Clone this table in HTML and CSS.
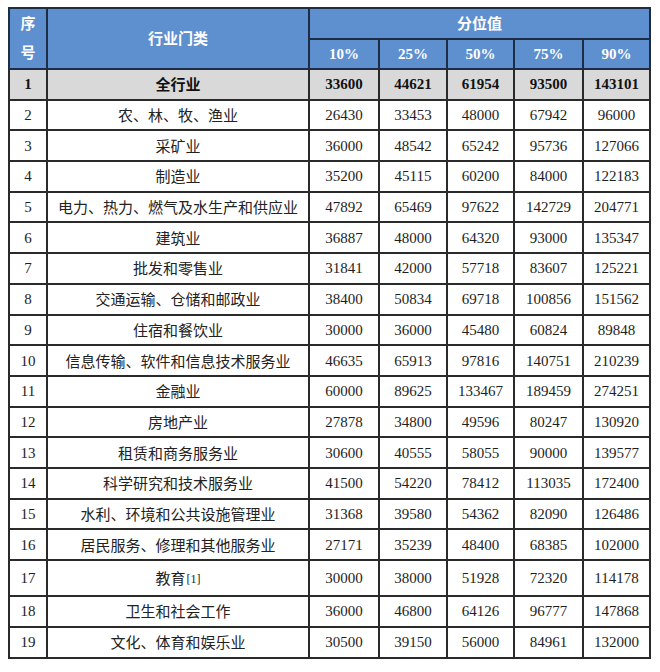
FILE: index.html
```html
<!DOCTYPE html>
<html lang="zh">
<head>
<meta charset="utf-8">
<link rel="stylesheet" href="styles.css">
</head>
<body>
<table class="wage">
  <colgroup>
    <col class="c-no"><col class="c-name"><col class="c-p10"><col class="c-p25"><col class="c-p50"><col class="c-p75"><col class="c-p90">
  </colgroup>
  <thead>
    <tr class="h1">
      <th rowspan="2" class="no-head">序<br>号</th>
      <th rowspan="2">行业门类</th>
      <th colspan="5">分位值</th>
    </tr>
    <tr class="h2">
      <th class="num">10%</th><th class="num">25%</th><th class="num">50%</th><th class="num">75%</th><th class="num">90%</th>
    </tr>
  </thead>
  <tbody>
    <tr class="total"><td>1</td><td class="name">全行业</td><td>33600</td><td>44621</td><td>61954</td><td>93500</td><td>143101</td></tr>
    <tr><td>2</td><td class="name">农、林、牧、渔业</td><td>26430</td><td>33453</td><td>48000</td><td>67942</td><td>96000</td></tr>
    <tr><td>3</td><td class="name">采矿业</td><td>36000</td><td>48542</td><td>65242</td><td>95736</td><td>127066</td></tr>
    <tr><td>4</td><td class="name">制造业</td><td>35200</td><td>45115</td><td>60200</td><td>84000</td><td>122183</td></tr>
    <tr><td>5</td><td class="name">电力、热力、燃气及水生产和供应业</td><td>47892</td><td>65469</td><td>97622</td><td>142729</td><td>204771</td></tr>
    <tr><td>6</td><td class="name">建筑业</td><td>36887</td><td>48000</td><td>64320</td><td>93000</td><td>135347</td></tr>
    <tr><td>7</td><td class="name">批发和零售业</td><td>31841</td><td>42000</td><td>57718</td><td>83607</td><td>125221</td></tr>
    <tr><td>8</td><td class="name">交通运输、仓储和邮政业</td><td>38400</td><td>50834</td><td>69718</td><td>100856</td><td>151562</td></tr>
    <tr><td>9</td><td class="name">住宿和餐饮业</td><td>30000</td><td>36000</td><td>45480</td><td>60824</td><td>89848</td></tr>
    <tr><td>10</td><td class="name">信息传输、软件和信息技术服务业</td><td>46635</td><td>65913</td><td>97816</td><td>140751</td><td>210239</td></tr>
    <tr><td>11</td><td class="name">金融业</td><td>60000</td><td>89625</td><td>133467</td><td>189459</td><td>274251</td></tr>
    <tr><td>12</td><td class="name">房地产业</td><td>27878</td><td>34800</td><td>49596</td><td>80247</td><td>130920</td></tr>
    <tr><td>13</td><td class="name">租赁和商务服务业</td><td>30600</td><td>40555</td><td>58055</td><td>90000</td><td>139577</td></tr>
    <tr><td>14</td><td class="name">科学研究和技术服务业</td><td>41500</td><td>54220</td><td>78412</td><td>113035</td><td>172400</td></tr>
    <tr><td>15</td><td class="name">水利、环境和公共设施管理业</td><td>31368</td><td>39580</td><td>54362</td><td>82090</td><td>126486</td></tr>
    <tr><td>16</td><td class="name">居民服务、修理和其他服务业</td><td>27171</td><td>35239</td><td>48400</td><td>68385</td><td>102000</td></tr>
    <tr class="tall"><td>17</td><td class="name">教育<span class="note">[1]</span></td><td>30000</td><td>38000</td><td>51928</td><td>72320</td><td>114178</td></tr>
    <tr class="last"><td>18</td><td class="name">卫生和社会工作</td><td>36000</td><td>46800</td><td>64126</td><td>96777</td><td>147868</td></tr>
    <tr class="last"><td>19</td><td class="name">文化、体育和娱乐业</td><td>30500</td><td>39150</td><td>56000</td><td>84961</td><td>132000</td></tr>
  </tbody>
</table>
</body>
</html>
```
FILE: styles.css
```css
html, body {
  margin: 0;
  padding: 0;
  background: #ffffff;
}
body {
  padding: 7px 0 0 8px;
}
.wage {
  border-collapse: collapse;
  table-layout: fixed;
  width: 641px;
  font-family: "Liberation Serif", "Noto Sans CJK SC", serif;
  font-size: 15px;
  color: #1e1e1e;
  border: 2px solid #2a2a2a;
}
.c-no { width: 38px; }
.c-name { width: 262px; }
.c-p10 { width: 70px; }
.c-p25 { width: 68px; }
.c-p50 { width: 67px; }
.c-p75 { width: 69px; }
.c-p90 { width: 67px; }

.wage th, .wage td {
  border: 2px solid #2a2a2a;
  padding: 0;
  text-align: center;
  vertical-align: middle;
  line-height: 18px;
}
.wage thead th {
  background: #5e90d0;
  color: #ffffff;
  font-weight: bold;
  font-family: "Liberation Serif", "Noto Sans CJK SC", serif;
  border-color: #1f2d44;
}
.wage .h1 { height: 31px; }
.wage .h2 { height: 30px; }
.wage thead th.no-head {
  line-height: 29px;
}
.wage thead th.num {
  font-size: 15px;
}
.wage tbody tr { height: 30.7px; }
.wage tbody tr.tall { height: 36px; }
.wage tbody tr.last { height: 30.9px; }
.wage .name {
  font-family: "Noto Sans CJK SC", sans-serif;
  font-size: 15px;
  color: #222;
}
.wage tr.total td {
  background: #d9d9d9;
  font-weight: bold;
  color: #111;
}
.note {
  font-family: "Liberation Serif", serif;
  font-size: 12px;
  vertical-align: 1px;
  margin-left: 1px;
}
```
